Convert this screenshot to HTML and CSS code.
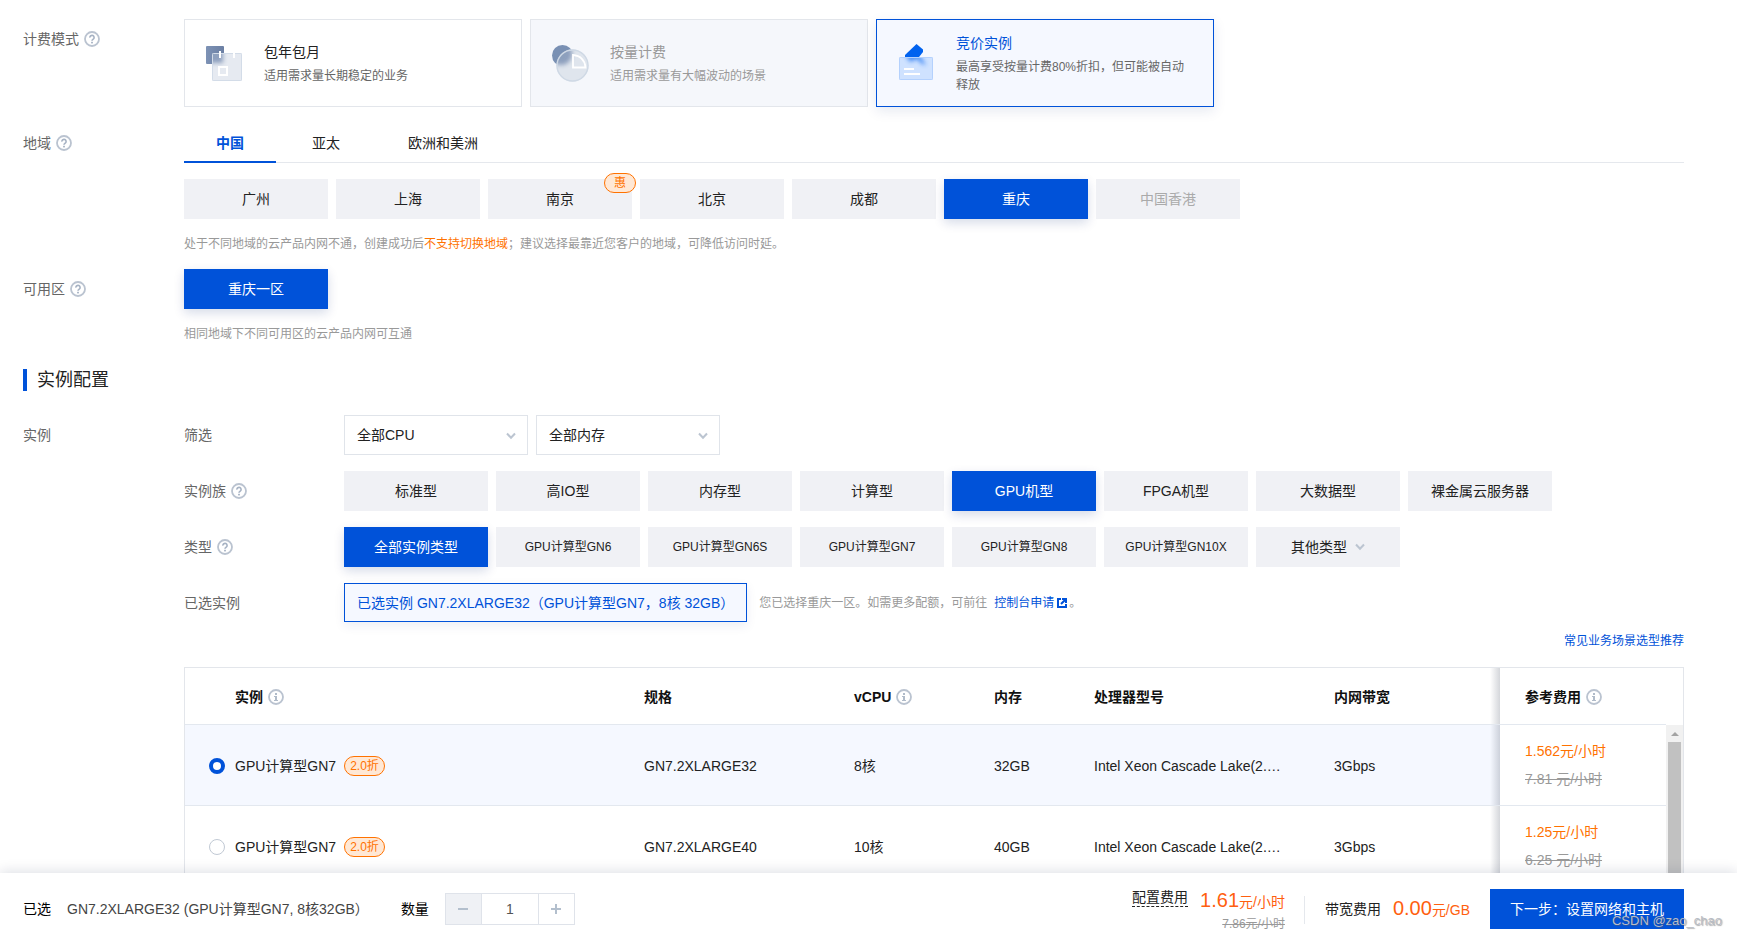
FILE: index.html
```html
<!DOCTYPE html>
<html lang="zh-CN">
<head>
<meta charset="utf-8">
<title>云服务器选购</title>
<link rel="stylesheet" href="styles.css">
</head>
<body>
<svg class="defs" aria-hidden="true">
  <symbol id="i-help" viewBox="0 0 16 16"><circle cx="8" cy="8" r="7" fill="none" stroke="#bac3d0" stroke-width="1.8"/><path d="M5.9 6.6a2.1 2.1 0 1 1 3.3 1.6C8.4 8.8 8 9 8 9.8" fill="none" stroke="#a6b2c3" stroke-width="1.6"/><rect x="7.1" y="10.8" width="1.8" height="1.6" fill="#a6b2c3"/></symbol>
  <symbol id="i-info" viewBox="0 0 16 16"><circle cx="8" cy="8" r="7" fill="none" stroke="#bac3d0" stroke-width="1.8"/><path d="M7 4h2v2H7zM6 7h3v4h1v1H6v-1h1V8H6z" fill="#b0bbc9"/></symbol>
  <symbol id="i-down" viewBox="0 0 10 8"><path d="M1 1.5 5 5.8 9 1.5" fill="none" stroke="#bcc5d1" stroke-width="2"/></symbol>
</svg>
<main class="page">
  <section class="row">
    <div class="label">计费模式<svg class="tip"><use href="#i-help"/></svg></div>
    <div class="cards">
      <button class="card">
        <svg class="card-icon" viewBox="0 0 40 40">
          <defs><filter id="b1" x="-50%" y="-50%" width="200%" height="200%"><feGaussianBlur stdDeviation="2"/></filter><linearGradient id="g1" x2="1"><stop stop-color="#7d92b5"/><stop offset="1" stop-color="#6b7fa3"/></linearGradient><clipPath id="c1"><rect x="8" y="10" width="30" height="28" rx="1"/></clipPath></defs>
          <rect x="2" y="3" width="18" height="18" rx="1" fill="url(#g1)"/>
          <g clip-path="url(#c1)"><rect x="8" y="10" width="30" height="28" fill="#e6eaf1"/><rect x="0" y="2" width="19" height="18" fill="#7288ad" opacity=".75" filter="url(#b1)"/></g>
          <rect x="8.5" y="10.500" width="29" height="27" rx="1" fill="none" stroke="#d3dce8"/>
          <path d="M15 8h2v7h-2zM29 10h2v5h-2z" fill="#fff"/><rect x="15" y="24" width="8" height="8" fill="none" stroke="#fff" stroke-width="2"/>
        </svg>
        <span class="card-text"><span class="card-title">包年包月</span><span class="card-desc">适用需求量长期稳定的业务</span></span>
      </button>
      <button class="card disabled" disabled>
        <svg class="card-icon" viewBox="0 0 40 40">
          <defs><clipPath id="c2"><circle cx="22.500" cy="22.500" r="16"/></clipPath></defs>
          <circle cx="12.500" cy="12.500" r="10.500" fill="#7990b3"/>
          <g clip-path="url(#c2)"><rect width="40" height="40" fill="#dfe5ed"/><circle cx="11" cy="11" r="11" fill="#7288ad" opacity=".75" filter="url(#b1)"/></g>
          <circle cx="22.500" cy="22.500" r="15.500" fill="none" stroke="#cfd9e5" stroke-width="1.400"/>
          <path d="M23 12v12.500h12.500C35 17 30 12.500 23 12z" fill="none" stroke="#fff" stroke-width="1.800"/>
        </svg>
        <span class="card-text"><span class="card-title">按量计费</span><span class="card-desc">适用需求量有大幅波动的场景</span></span>
      </button>
      <button class="card selected">
        <svg class="card-icon" viewBox="0 0 40 40">
          <defs><clipPath id="c3"><rect x="3" y="14" width="34" height="23" rx="1"/></clipPath></defs>
          <path d="M20.500 1 27 6.500V9l-4 5H9v-2z" fill="#0062ef"/>
          <g clip-path="url(#c3)"><rect x="3" y="14" width="34" height="23" fill="#cfe2ff"/><path d="M9 11h14l7 11-4-1-5-5-7 3z" fill="#2a7bf2" opacity=".8" filter="url(#b1)"/></g>
          <rect x="3.500" y="14.500" width="33" height="22" rx="1" fill="none" stroke="#b4d1fd"/>
          <path d="M8 25h10v2H8zM8 30h16v2H8z" fill="#fff"/>
        </svg>
        <span class="card-text"><span class="card-title">竞价实例</span><span class="card-desc">最高享受按量计费80%折扣，但可能被自动释放</span></span>
      </button>
    </div>
  </section>

  <section class="row">
    <div class="label">地域<svg class="tip"><use href="#i-help"/></svg></div>
    <div class="content">
      <nav class="tabs"><button class="tab active">中国</button><button class="tab">亚太</button><button class="tab">欧洲和美洲</button></nav>
      <div class="options">
        <button class="option">广州</button><button class="option">上海</button>
        <button class="option">南京<span class="pill corner">惠</span></button>
        <button class="option">北京</button><button class="option">成都</button><button class="option on">重庆</button><button class="option" disabled>中国香港</button>
      </div>
      <p class="hint">处于不同地域的云产品内网不通，创建成功后<em>不支持切换地域</em>；建议选择最靠近您客户的地域，可降低访问时延。</p>
    </div>
  </section>

  <section class="row">
    <div class="label">可用区<svg class="tip"><use href="#i-help"/></svg></div>
    <div class="content">
      <div class="options"><button class="option on">重庆一区</button></div>
      <p class="hint">相同地域下不同可用区的云产品内网可互通</p>
    </div>
  </section>

  <h2 class="heading">实例配置</h2>

  <section class="row">
    <div class="label">实例</div>
    <div class="content">
      <div class="subrow">
        <div class="sublabel">筛选</div>
        <div class="options">
          <div class="select"><select aria-label="CPU"><option>全部CPU</option></select><svg class="arrow"><use href="#i-down"/></svg></div>
          <div class="select"><select aria-label="内存"><option>全部内存</option></select><svg class="arrow"><use href="#i-down"/></svg></div>
        </div>
      </div>
      <div class="subrow">
        <div class="sublabel">实例族<svg class="tip"><use href="#i-help"/></svg></div>
        <div class="options">
          <button class="option">标准型</button><button class="option">高IO型</button><button class="option">内存型</button><button class="option">计算型</button><button class="option on">GPU机型</button><button class="option">FPGA机型</button><button class="option">大数据型</button><button class="option">裸金属云服务器</button>
        </div>
      </div>
      <div class="subrow">
        <div class="sublabel">类型<svg class="tip"><use href="#i-help"/></svg></div>
        <div class="options">
          <button class="option on">全部实例类型</button><button class="option small">GPU计算型GN6</button><button class="option small">GPU计算型GN6S</button><button class="option small">GPU计算型GN7</button><button class="option small">GPU计算型GN8</button><button class="option small">GPU计算型GN10X</button><button class="option">其他类型<svg class="arrow-inline"><use href="#i-down"/></svg></button>
        </div>
      </div>
      <div class="subrow">
        <div class="sublabel">已选实例</div>
        <div class="chosen">已选实例 GN7.2XLARGE32（GPU计算型GN7，8核 32GB）</div>
        <p class="quota">您已选择重庆一区。如需更多配额，可前往<a href="#">控制台申请<svg class="ext" viewBox="0 0 10 10"><path d="M0 0h4v2H2v6h6V6h2v4H0zM5 0h5v5H8V3.400L4.700 6.700 3.300 5.300 6.600 2H5z" fill="#0052d9"/></svg></a>。</p>
      </div>
      <div class="more"><a href="#">常见业务场景选型推荐</a></div>
      <div class="table-box">
        <table class="table">
          <colgroup><col><col class="w-spec"><col class="w-cpu"><col class="w-mem"><col class="w-model"><col class="w-net"><col class="w-price"></colgroup>
          <thead><tr><th class="first">实例<svg class="tip"><use href="#i-info"/></svg></th><th>规格</th><th>vCPU<svg class="tip"><use href="#i-info"/></svg></th><th>内存</th><th>处理器型号</th><th class="edge">内网带宽</th><th class="price">参考费用<svg class="tip"><use href="#i-info"/></svg></th></tr></thead>
          <tbody>
            <tr class="picked"><td><label class="pick"><input type="radio" name="inst" checked><span>GPU计算型GN7</span><span class="pill">2.0折</span></label></td><td>GN7.2XLARGE32</td><td>8核</td><td>32GB</td><td>Intel Xeon Cascade Lake(2.…</td><td class="edge">3Gbps</td><td class="price"><strong>1.562元/小时</strong><s>7.81 元/小时</s></td></tr>
            <tr><td><label class="pick"><input type="radio" name="inst"><span>GPU计算型GN7</span><span class="pill">2.0折</span></label></td><td>GN7.2XLARGE40</td><td>10核</td><td>40GB</td><td>Intel Xeon Cascade Lake(2.…</td><td class="edge">3Gbps</td><td class="price"><strong>1.25元/小时</strong><s>6.25 元/小时</s></td></tr>
          </tbody>
        </table>
        <div class="scrollbar"><span class="scroll-up"></span><span class="thumb"></span></div>
      </div>
    </div>
  </section>
</main>

<footer class="bar">
  <span class="bar-label">已选</span>
  <span class="bar-spec">GN7.2XLARGE32 (GPU计算型GN7, 8核32GB）</span>
  <label class="bar-qty" for="qty">数量</label>
  <div class="stepper">
    <button disabled aria-label="减少"><svg viewBox="0 0 12 12"><path d="M1 5h10v2H1z"/></svg></button>
    <input id="qty" type="text" value="1">
    <button aria-label="增加"><svg viewBox="0 0 12 12"><path d="M1 5h4V1h2v4h4v2H7v4H5V7H1z"/></svg></button>
  </div>
  <div class="fee config">
    <span class="fee-name dashed">配置费用</span>
    <div class="fee-values"><span class="fee-value"><b>1.61</b>元/小时</span><s>7.86元/小时</s></div>
  </div>
  <div class="fee">
    <span class="fee-name">带宽费用</span>
    <span class="fee-value"><b>0.00</b>元/GB</span>
  </div>
  <button class="next">下一步：设置网络和主机</button>
  <span class="mark">CSDN @zao_chao</span>
</footer>
</body>
</html>
```
FILE: styles.css
```css
* { box-sizing: border-box; }
body {
  margin: 0;
  height: 100vh;
  display: flex;
  flex-direction: column;
  overflow: hidden;
  background: #fff;
  color: #222;
  font: 14px/20px "Liberation Sans", "Noto Sans CJK SC", sans-serif;
}
button, input, select { font: inherit; color: inherit; margin: 0; }
button { border: 0; padding: 0; background: none; }
a { color: #0052d9; text-decoration: none; }
.defs { position: absolute; width: 0; height: 0; }

.page { flex: 1; min-height: 0; overflow: hidden; padding: 19px 53px 0 23px; }
.row { display: flex; margin-bottom: 16px; }
.label, .sublabel { flex: none; display: flex; align-items: center; height: 40px; color: #666; }
.label { width: 161px; }
.sublabel { width: 160px; }
.tip { width: 16px; height: 16px; margin-left: 5px; flex: none; }
.content { flex: 1; min-width: 0; }

.cards, .options { display: flex; gap: 8px; }
.card {
  width: 338px; height: 88px; padding: 0 19px;
  display: flex; align-items: center; gap: 20px;
  border: 1px solid #e3e6eb; background: #fff; text-align: left;
}
.card-icon { width: 40px; height: 40px; flex: none; }
.card-text { display: flex; flex-direction: column; gap: 5px; }
.card-desc { font-size: 12px; line-height: 18px; color: #666; }
.card.disabled { background: #f5f7fb; color: #999; }
.card.disabled .card-desc { color: #999; }
.card.selected { border-color: #0052d9; background: #f5f8ff; box-shadow: 0 4px 12px rgba(0, 40, 120, .1); }
.selected .card-title { color: #0052d9; }

.tabs { display: flex; gap: 4px; height: 40px; margin-bottom: 16px; border-bottom: 1px solid #e5e8ed; }
.tab { height: 40px; padding: 2px 32px 0; border-bottom: 2px solid transparent; }
.tab.active { color: #0052d9; font-weight: bold; border-color: #0052d9; }

.option {
  position: relative; width: 144px; height: 40px;
  display: flex; align-items: center; justify-content: center;
  background: #f0f1f5;
}
.option.on { background: #0052d9; color: #fff; box-shadow: 0 4px 10px rgba(0, 40, 120, .16); }
.option.small { font-size: 12px; }
.option:disabled { color: #aaa; }
.pill {
  display: inline-flex; align-items: center; justify-content: center;
  height: 20px; padding: 0 5px;
  border: 1px solid #ff7200; border-radius: 10px;
  background: #ffe8d5; color: #ff7200; font-size: 12px;
}
.corner { position: absolute; top: -6px; right: -4px; width: 32px; }
.hint { margin: 16px 0 0; color: #999; font-size: 12px; line-height: 18px; }
.hint em { font-style: normal; color: #ff7200; }

.heading { margin: 26px 0 24px; padding: 1px 0 0 10px; border-left: 4px solid #0052d9; font-size: 18px; line-height: 21px; font-weight: normal; }

.subrow { display: flex; margin-bottom: 16px; }
.select { position: relative; width: 184px; height: 40px; }
.select select { width: 100%; height: 100%; padding: 0 12px; appearance: none; border: 1px solid #e0e4ea; border-radius: 0; background: #fff; }
.arrow { position: absolute; right: 12px; top: 17px; width: 10px; height: 8px; pointer-events: none; }
.arrow-inline { width: 10px; height: 8px; margin-left: 8px; }
.chosen {
  height: 39px; padding: 0 12px; min-width: 403px; display: flex; align-items: center;
  border: 1px solid #0052d9; background: #f5f8ff; color: #0052d9; box-shadow: 0 4px 10px rgba(0, 40, 120, .08);
}
.quota { margin: 0 0 0 12px; color: #999; font-size: 12px; line-height: 40px; }
.quota a { margin: 0 2px 0 7px; }
.ext { width: 10px; height: 10px; margin-left: 3px; vertical-align: -1px; }
.more { margin-top: -7px; margin-bottom: 17px; text-align: right; font-size: 12px; line-height: 18px; }

.table-box { position: relative; border: 1px solid #e3e6eb; }
.table { width: 100%; table-layout: fixed; border-collapse: separate; border-spacing: 0; }
.w-spec { width: 210px; }
.w-cpu { width: 140px; }
.w-mem { width: 100px; }
.w-model { width: 240px; }
.w-net { width: 176px; }
.w-price { width: 183px; }
.table th, .table td { padding: 2px 10px 0; text-align: left; border-bottom: 1px solid #e3e8ef; white-space: nowrap; }
.table th { height: 57px; color: #111; }
.table td { height: 81px; }
.table th.first { padding-left: 50px; }
.table .tip { vertical-align: -3px; }
.picked { background: #f5f8ff; }
.picked .price { background: #fff; }
.table .edge { background-image: linear-gradient(to left, rgba(60, 70, 90, .22), rgba(60, 70, 90, 0)); background-size: 10px 100%; background-position: right; background-repeat: no-repeat; }
.table .price { padding-left: 25px; }
.table td.price { padding-top: 0; }
.price strong, .price s { display: block; line-height: 28px; font-weight: normal; }
.price strong { color: #ff7200; }
s { color: #999; }
.pick { display: flex; align-items: center; padding-left: 14px; }
.pick input { appearance: none; width: 16px; height: 16px; margin: 0 10px 0 0; border: 1px solid #c1c9d4; border-radius: 50%; background: #fff; }
.pick input:checked { border: 4px solid #0052d9; }
.pick .pill { margin-left: 8px; }
.scrollbar { position: absolute; top: 56px; right: 0; bottom: 0; width: 17px; display: flex; flex-direction: column; align-items: center; background: #f1f1f1; border-top: 1px solid #fff; }
.scroll-up { width: 0; height: 0; margin: 7px 0 6px; border: 4px solid transparent; border-top: 0; border-bottom-color: #a3a3a3; }
.thumb { flex: 1; width: 13px; background: #c1c1c1; }

.bar {
  position: relative; flex: none; height: 64px; padding: 8px 53px 0 23px;
  display: flex; align-items: center; background: #fff; box-shadow: 0 -2px 12px rgba(0, 20, 60, .13);
}
.bar-label { color: #000; }
.bar-spec { margin-left: 16px; color: #444; }
.bar-qty { margin-left: 32px; color: #000; }
.stepper { display: flex; width: 130px; height: 32px; margin-left: 16px; border: 1px solid #dfe3ea; }
.stepper button { width: 35px; display: flex; align-items: center; justify-content: center; }
.stepper button:disabled { background: #eff1f5; }
.stepper svg { width: 12px; height: 12px; fill: #b3bfcd; }
.stepper input { flex: 1; min-width: 0; padding: 0; border: solid #dfe3ea; border-width: 0 1px; text-align: center; color: #555; }
.fee { display: flex; align-items: center; gap: 12px; padding: 0 20px; color: #222; }
.config { align-items: flex-start; margin-left: auto; padding-top: 4px; position: relative; }
.config::after { content: ""; position: absolute; right: 0; top: 12px; height: 28px; border-right: 1px solid #e5e8ed; }
.dashed { line-height: 18px; border-bottom: 1px dashed #222; }
.fee-values { display: flex; flex-direction: column; align-items: flex-end; }
.fee-value { color: #ff5f0f; line-height: 24px; }
.fee-value b { font-size: 20px; font-weight: normal; }
.fee-values s { font-size: 12px; line-height: 20px; }
.next { width: 194px; height: 40px; background: #0052d9; color: #fff; }
.mark { position: absolute; right: 15px; bottom: 6px; color: #b8bcc4; font-size: 13px; text-shadow: 1px 1px 1px rgba(90, 90, 90, .5); pointer-events: none; }
```
